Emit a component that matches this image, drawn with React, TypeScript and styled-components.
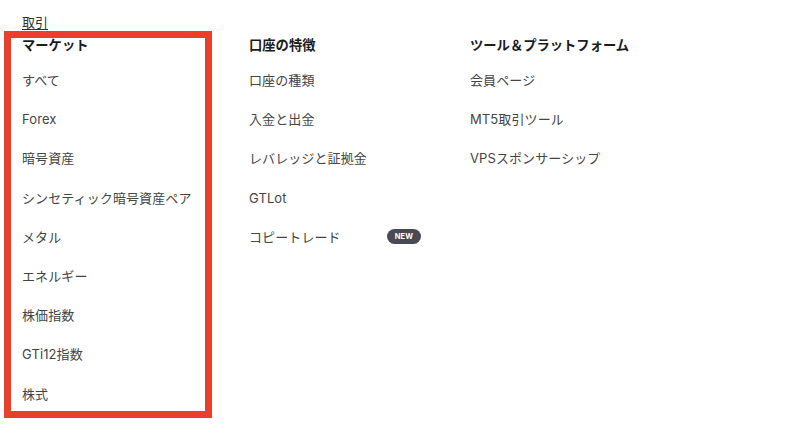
import React from 'react'
import styled, { createGlobalStyle } from 'styled-components'

const GlobalStyle = createGlobalStyle`
    html, body {
        margin: 0;
        padding: 0;
        background: #ffffff;
    }
    body {
        font-family: Inter, 'Noto Sans CJK JP', sans-serif;
        color: #333333;
    }
`

const Page = styled.div`
    width: 800px;
    height: 432px;
    box-sizing: border-box;
    padding: 13px 0 0 4px;
`

const Title = styled.a`
    display: block;
    width: fit-content;
    margin-left: 18px;
    font-size: 13px;
    line-height: 18px;
    color: #333333;
    text-decoration: underline;
    text-underline-offset: 2px;
`

const Menu = styled.div`
    display: grid;
    grid-template-columns: 208px 184px 221px;
    column-gap: 37px;
`

const Column = styled.div<{ highlighted?: boolean }>`
    display: flex;
    flex-direction: column;
    box-sizing: border-box;
    border: ${props => props.highlighted ? '7px solid #e8402b' : 'none'};
    padding: ${props => props.highlighted ? '0 0 7px 11px' : '7px 0 0 0'};
`

const Heading = styled.h3`
    margin: 0 0 18px;
    font-size: 13.3px;
    line-height: 14px;
    font-weight: 700;
    color: #1c1c1c;
`

const ItemList = styled.ul`
    list-style: none;
    margin: 0;
    padding: 0;
    display: flex;
    flex-direction: column;
    gap: 19.2px;
`

const Item = styled.li`
    display: flex;
    align-items: center;
    justify-content: space-between;
    width: 172px;
    font-size: 13px;
    line-height: 20px;
    letter-spacing: 0.1px;
    color: #454545;
    white-space: nowrap;
`

const Badge = styled.span`
    display: inline-flex;
    align-items: center;
    justify-content: center;
    width: 34px;
    height: 15px;
    border-radius: 8px;
    background: #4a4a52;
    color: #ffffff;
    font-size: 7.5px;
    font-weight: 700;
    letter-spacing: 0.2px;
`

interface IColumn {
    title: string
    items: { label: string, isNew?: boolean }[]
    highlighted?: boolean
}

const columns: IColumn[] = [
    {
        title: 'マーケット',
        highlighted: true,
        items: [
            { label: 'すべて' },
            { label: 'Forex' },
            { label: '暗号資産' },
            { label: 'シンセティック暗号資産ペア' },
            { label: 'メタル' },
            { label: 'エネルギー' },
            { label: '株価指数' },
            { label: 'GTi12指数' },
            { label: '株式' },
        ],
    },
    {
        title: '口座の特徴',
        items: [
            { label: '口座の種類' },
            { label: '入金と出金' },
            { label: 'レバレッジと証拠金' },
            { label: 'GTLot' },
            { label: 'コピートレード', isNew: true },
        ],
    },
    {
        title: 'ツール＆プラットフォーム',
        items: [
            { label: '会員ページ' },
            { label: 'MT5取引ツール' },
            { label: 'VPSスポンサーシップ' },
        ],
    },
]

function App() {
    return (
        <Page>
            <GlobalStyle />
            <Title>取引</Title>
            <Menu>
                {columns.map(col => (
                    <Column key={col.title} highlighted={col.highlighted}>
                        <Heading>{col.title}</Heading>
                        <ItemList>
                            {col.items.map(item => (
                                <Item key={item.label}>
                                    <span>{item.label}</span>
                                    {item.isNew && <Badge>NEW</Badge>}
                                </Item>
                            ))}
                        </ItemList>
                    </Column>
                ))}
            </Menu>
        </Page>
    )
}

export default App
